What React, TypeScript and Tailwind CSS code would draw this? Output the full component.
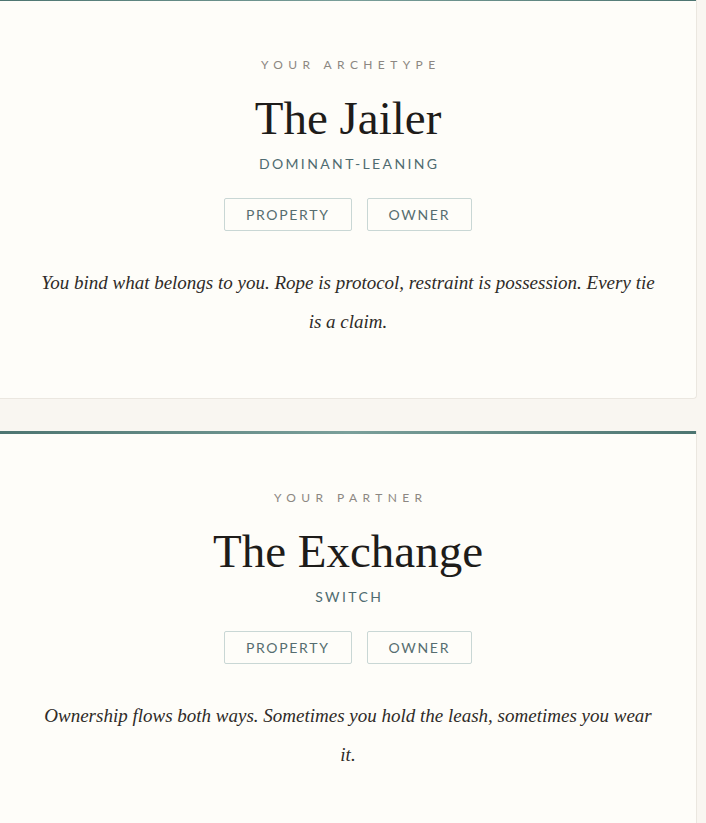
const sans = "font-['Lato','Noto_Sans',sans-serif]";
const serif = "font-['Liberation_Serif','Times_New_Roman',serif]";

type Card = {
    label: string;
    title: string;
    leaning: string;
    tags: string[];
    text: string;
};

const cards: Card[] = [
    {
        label: 'Your Archetype',
        title: 'The Jailer',
        leaning: 'Dominant-leaning',
        tags: ['Property', 'Owner'],
        text: 'You bind what belongs to you. Rope is protocol, restraint is possession. Every tie is a claim.',
    },
    {
        label: 'Your Partner',
        title: 'The Exchange',
        leaning: 'Switch',
        tags: ['Property', 'Owner'],
        text: 'Ownership flows both ways. Sometimes you hold the leash, sometimes you wear it.',
    },
];

const ResultCard = ({ card }: { card: Card }) => (
    <div className="bg-[#fefdf9] border-r border-b border-[#ebe7e0] rounded-br-[4px] overflow-hidden">
        <div className="h-[3px] bg-gradient-to-r from-[#4d7571] via-[#7a9f9a] to-[#4d7571]" />
        <div className="flex flex-col items-center px-[36px] pt-[56px] pb-[57px] text-center">
            <div className={`${sans} text-[12px] leading-4 uppercase tracking-[0.45em] text-[#8c8782] pl-[0.45em]`}>
                {card.label}
            </div>
            <h2 className={`${serif} mt-[18px] text-[47px] leading-[54px] text-[#1e1c1a]`}>{card.title}</h2>
            <div className={`${sans} mt-[9px] text-[14px] leading-5 uppercase tracking-[0.17em] text-[#4f6b70] pl-[0.17em]`}>
                {card.leaning}
            </div>
            <div className="mt-[24px] flex gap-[15px]">
                {card.tags.map((tag) => (
                    <span
                        key={tag}
                        className={`${sans} h-[33px] flex items-center px-[21px] border border-[#c9d7d5] rounded-[2px] text-[14px] uppercase tracking-[0.12em] text-[#566d70]`}
                    >
                        {tag}
                    </span>
                ))}
            </div>
            <p className={`${serif} italic mt-[32px] max-w-[622px] text-[19px] leading-[39px] text-[#2f2b28]`}>
                {card.text}
            </p>
        </div>
    </div>
);

const App = () => {
    return (
        <div className="min-h-screen bg-[#f9f6f1]">
            <div className="w-[697px] -mt-[2px] flex flex-col gap-8">
                {cards.map((card) => (
                    <ResultCard key={card.title} card={card} />
                ))}
            </div>
        </div>
    );
};

export default App;
